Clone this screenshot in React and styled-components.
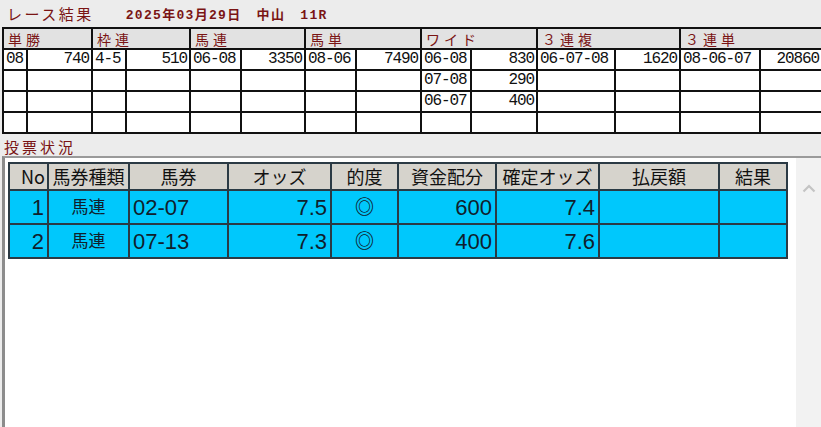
import React from "react";
import styled, { createGlobalStyle } from "styled-components";

const GlobalStyle = createGlobalStyle`
  html, body { margin: 0; padding: 0; }
  body {
    background: #ececec;
    overflow: hidden;
    font-family: "Noto Sans CJK JP", "Liberation Sans", sans-serif;
  }
`;

const Page = styled.div`
  width: 821px;
  height: 427px;
  display: flex;
  flex-direction: column;
  overflow: hidden;
`;

const TitleBar = styled.div`
  height: 27px;
  flex: none;
  display: flex;
  align-items: center;
  padding-left: 7px;
  color: #7a1414;
  gap: 32px;
`;

const Title = styled.span`
  font-size: 15px;
  letter-spacing: 2.5px;
`;

const SubTitle = styled.span`
  font-family: "Liberation Mono", "Noto Sans CJK JP", monospace;
  font-size: 13px;
  font-weight: bold;
  letter-spacing: 1.3px;
  word-spacing: 6px;
`;

const ResultTable = styled.table`
  border-collapse: collapse;
  table-layout: fixed;
  margin-left: 2px;
  width: 819px;
  flex: none;
  td {
    border: 2px solid #111;
    padding: 0 2px;
    white-space: nowrap;
    overflow: hidden;
  }
`;

const Row = styled.tr`
  height: ${(p) => p.$h}px;
`;

const HeadCell = styled.td`
  background: #e2e2e2;
  color: #7a1414;
  font-size: 14px;
  letter-spacing: 4px;
  line-height: 16px;
  && { padding-left: 4px; }
`;

const DataCell = styled.td`
  background: #fff;
  color: #111;
  font-family: "Liberation Mono", monospace;
  font-size: 16px;
  letter-spacing: -1.1px;
  line-height: 17px;
  text-align: ${(p) => (p.$right ? "right" : "left")};
`;

const SectionLabel = styled.div`
  height: 22px;
  flex: none;
  display: flex;
  align-items: center;
  padding: 2px 0 0 4px;
  box-sizing: border-box;
  color: #7a1414;
  font-size: 15px;
  letter-spacing: 3px;
`;

const Panel = styled.div`
  flex: 1;
  display: flex;
  margin-left: 2px;
  background: #fff;
  border-top: 2px solid #9a9a9a;
  border-left: 3px solid #8c8c8c;
  min-height: 0;
`;

const PanelBody = styled.div`
  flex: 1;
  padding: 4px 0 0 3px;
`;

const BetTable = styled.table`
  border-collapse: collapse;
  table-layout: fixed;
  width: 780px;
  th, td {
    border: 2px solid #2b3a44;
    white-space: nowrap;
    overflow: hidden;
  }
`;

const BetHead = styled.th`
  background: #d6d3cc;
  color: #111;
  font-weight: normal;
  font-size: 18px;
  padding: 0 2px;
  text-align: ${(p) => p.$align || "center"};
  line-height: 23px;
`;

const BetCell = styled.td`
  background: #00c8fc;
  color: #10202c;
  font-family: "Liberation Sans", "Noto Sans CJK JP", sans-serif;
  font-size: ${(p) => (p.$cjk ? "17px" : "22px")};
  padding: 0 3px;
  text-align: ${(p) => p.$align || "left"};
  line-height: 31px;
`;

const Mark = styled.span`
  font-size: 19px;
  font-weight: bold;
  color: #10202c;
`;

const Scrollbar = styled.div`
  width: 25px;
  background: #f2f2f2;
  display: flex;
  justify-content: center;
  padding-top: 26px;
  box-sizing: border-box;
`;

const resultCols = [24, 65, 34, 64, 51, 64, 51, 65, 50, 66, 78, 65, 80, 62];
const heads = ["単勝", "枠連", "馬連", "馬単", "ワイド", "３連複", "３連単"];
const resultRows = [
  ["08", "740", "4-5", "510", "06-08", "3350", "08-06", "7490", "06-08", "830", "06-07-08", "1620", "08-06-07", "20860"],
  ["", "", "", "", "", "", "", "", "07-08", "290", "", "", "", ""],
  ["", "", "", "", "", "", "", "", "06-07", "400", "", "", "", ""],
  ["", "", "", "", "", "", "", "", "", "", "", "", "", ""],
];

const betCols = [39, 81, 99, 103, 67, 98, 103, 120, 68];
const betHeads = ["No", "馬券種類", "馬券", "オッズ", "的度", "資金配分", "確定オッズ", "払戻額", "結果"];
const bets = [
  ["1", "馬連", "02-07", "7.5", "◎", "600", "7.4", "", ""],
  ["2", "馬連", "07-13", "7.3", "◎", "400", "7.6", "", ""],
];
const betAlign = ["right", "center", "left", "right", "center", "right", "right", "left", "left"];

export default function App() {
  return (
    <Page>
      <GlobalStyle />
      <TitleBar>
        <Title>レース結果</Title>
        <SubTitle>2025年03月29日 中山 11R</SubTitle>
      </TitleBar>
      <ResultTable>
        <colgroup>
          {resultCols.map((w, i) => (
            <col key={i} style={{ width: w }} />
          ))}
        </colgroup>
        <tbody>
          <Row $h={21}>
            {heads.map((h) => (
              <HeadCell key={h} colSpan={2}>
                {h}
              </HeadCell>
            ))}
          </Row>
          {resultRows.map((r, ri) => (
            <Row $h={21} key={ri}>
              {r.map((v, ci) => (
                <DataCell key={ci} $right={ci % 2 === 1}>
                  {v}
                </DataCell>
              ))}
            </Row>
          ))}
        </tbody>
      </ResultTable>
      <SectionLabel>投票状況</SectionLabel>
      <Panel>
        <PanelBody>
          <BetTable>
            <colgroup>
              {betCols.map((w, i) => (
                <col key={i} style={{ width: w }} />
              ))}
            </colgroup>
            <thead>
              <Row $h={27}>
                {betHeads.map((h, i) => (
                  <BetHead key={h} $align={i === 0 ? "right" : "center"}>
                    {h}
                  </BetHead>
                ))}
              </Row>
            </thead>
            <tbody>
              {bets.map((r, ri) => (
                <Row $h={34} key={ri}>
                  {r.map((v, ci) => (
                    <BetCell key={ci} $align={betAlign[ci]} $cjk={ci === 1}>
                      {v === "◎" ? <Mark>{v}</Mark> : v}
                    </BetCell>
                  ))}
                </Row>
              ))}
            </tbody>
          </BetTable>
        </PanelBody>
        <Scrollbar>
          <svg width="14" height="9" viewBox="0 0 14 9">
            <path d="M1.5 7.5 L7 2 L12.5 7.5" fill="none" stroke="#c4c4c4" strokeWidth="2.2" />
          </svg>
        </Scrollbar>
      </Panel>
    </Page>
  );
}
